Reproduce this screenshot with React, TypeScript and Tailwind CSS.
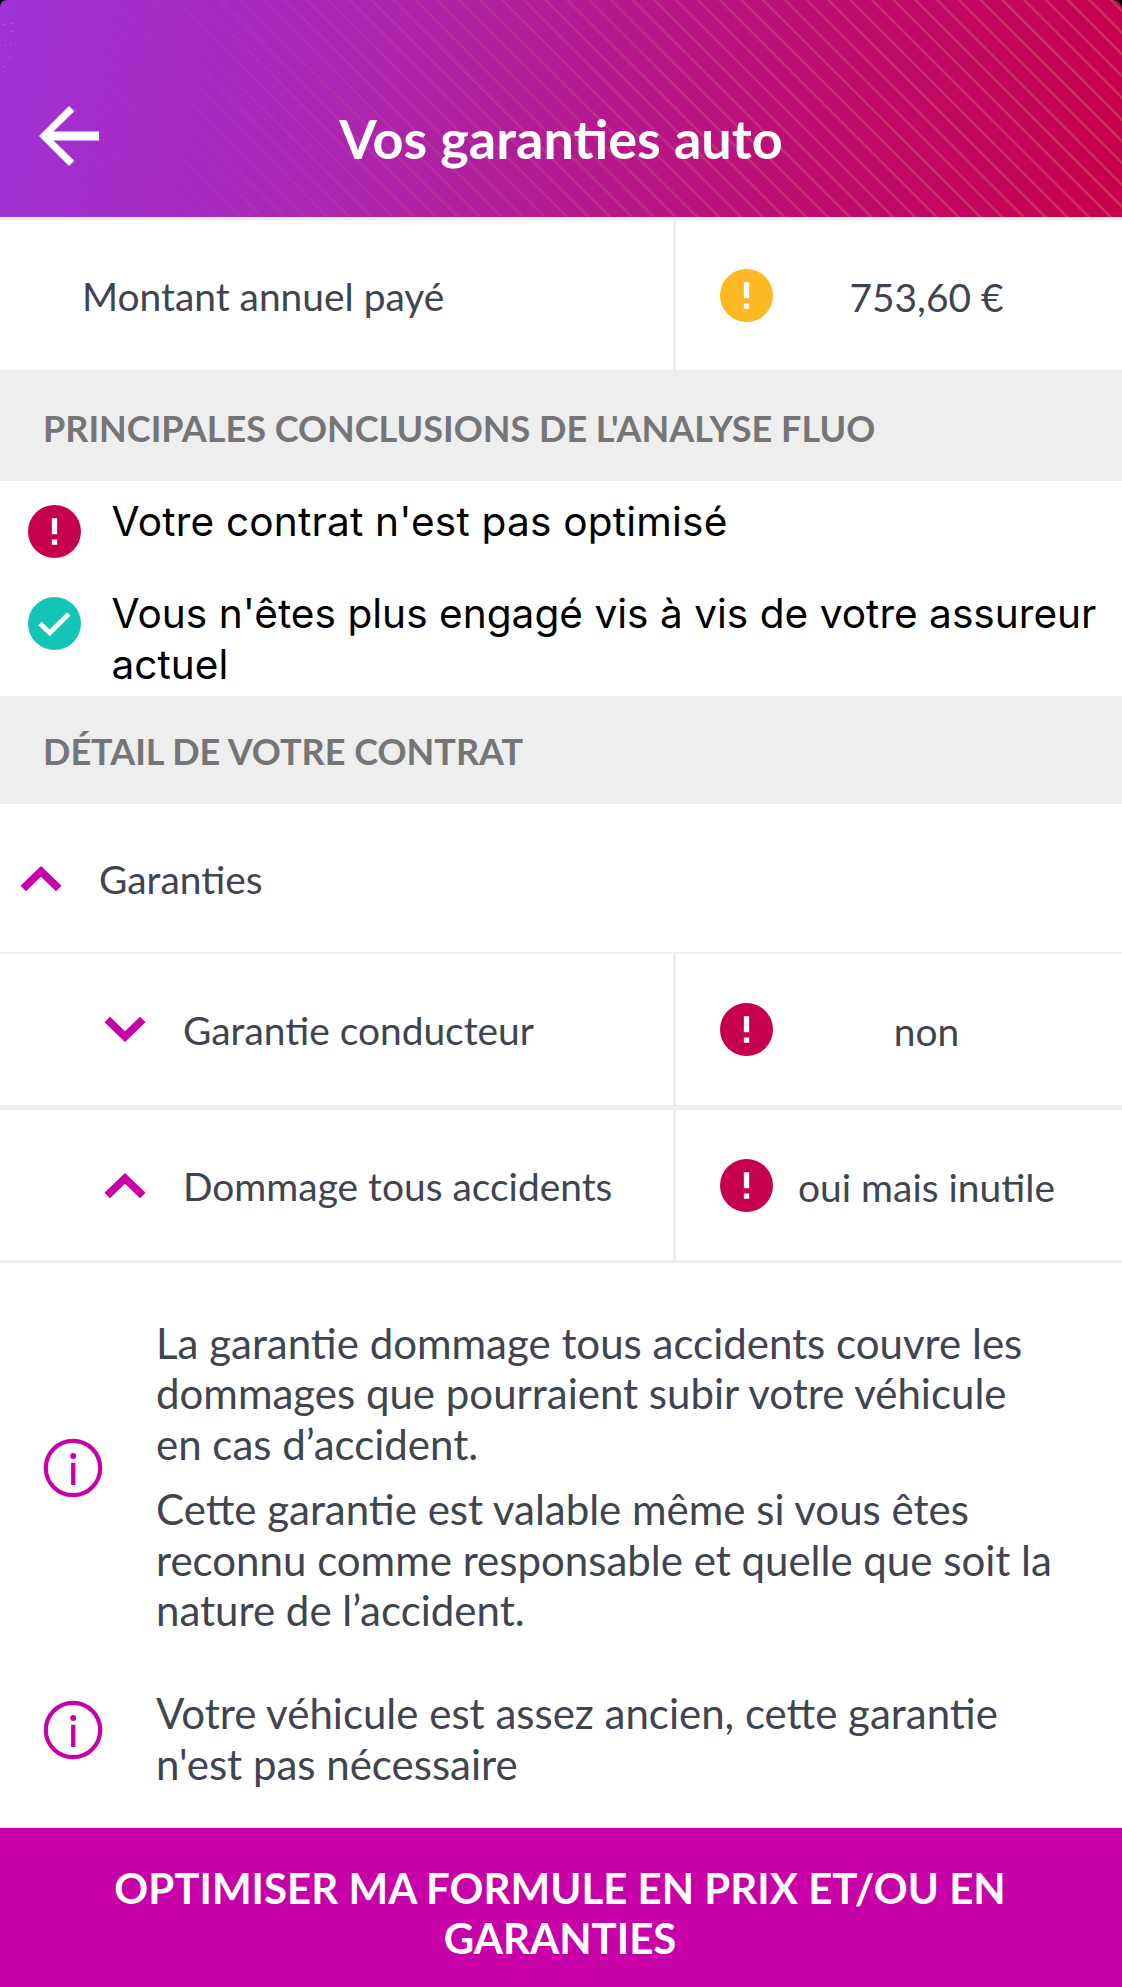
import type { ReactNode } from "react";

function BackArrow() {
  return (
    <svg viewBox="0 0 24 24" className="size-[90px] shrink-0 fill-white">
      <path d="M20 10.83H7.83l5.59-5.42L12 4l-8 8 8 8 1.41-1.41-5.58-5.42H20z" />
    </svg>
  );
}

function Sparkles() {
  const dots = [[4, 24], [12, 23], [11, 31], [5, 45], [10, 43], [9, 57], [4, 66]];
  return (
    <svg viewBox="0 0 20 70" className="pointer-events-none absolute top-0 left-0 h-[70px] w-[20px] fill-white/35">
      {dots.map(([x, y]) => (
        <rect key={`${x}-${y}`} x={x} y={y} width="1" height="1" />
      ))}
    </svg>
  );
}

function AlertIcon({ className }: { className: string }) {
  return (
    <svg viewBox="2 2 20 20" className={`size-[53px] shrink-0 ${className}`}>
      <circle cx="12" cy="12" r="10" fill="currentColor" />
      <path d="M11 7h2v6h-2zM11 15h2v2h-2z" fill="white" />
    </svg>
  );
}

function CheckIcon() {
  return (
    <svg viewBox="0 0 53 53" className="size-[53px] shrink-0 text-[#12c5b7]">
      <circle cx="26.5" cy="26.5" r="26.5" fill="currentColor" />
      <path d="M12 26.6l9.7 9.2L40.7 17" fill="none" stroke="white" strokeWidth="4.8" />
    </svg>
  );
}

function Chevron({ open }: { open: boolean }) {
  return (
    <svg viewBox="0 0 24 24" className="size-[82px] shrink-0 fill-[#c800a8]">
      {open ? (
        <path d="M12 8.2l-6 5.8 1.6 1.6L12 11.35l4.4 4.25L18 14z" />
      ) : (
        <path d="M16.4 8.1L12 12.35 7.6 8.1 6 9.7l6 5.8 6-5.8z" />
      )}
    </svg>
  );
}

function InfoIcon() {
  return (
    <svg viewBox="0 0 60 60" className="mb-[32px] size-[60px] shrink-0 text-[#c800a8]">
      <circle cx="30" cy="30" r="27.2" fill="none" stroke="currentColor" strokeWidth="4.2" />
      <circle cx="30.2" cy="18" r="3" fill="currentColor" />
      <path d="M28.1 24.7h4.3v22.4h-4.3z" fill="currentColor" />
    </svg>
  );
}

function SectionTitle({ className, children }: { className: string; children: ReactNode }) {
  return (
    <h2 className={`flex items-center bg-[#eeeeee] pl-[43px] text-[36px] font-bold text-[#757577] ${className}`}>
      {children}
    </h2>
  );
}

function Value({ icon, children }: { icon: string; children: ReactNode }) {
  return (
    <div className="flex h-full w-[449px] items-center border-l-[3px] border-[#eeeeee] pl-[44px]">
      <AlertIcon className={icon} />
      <span className="w-[307px] pt-[3px] text-center">{children}</span>
    </div>
  );
}

export default function App() {
  return (
    <div className="h-[1987px] w-[1122px] overflow-hidden bg-black font-['Lato',sans-serif] text-[38.9px] leading-[50px] text-[#40444f]">
      <header className="relative grid h-[217px] grid-cols-[115px_1fr_115px] items-center overflow-hidden rounded-tl-[7px] rounded-tr-[9px] bg-[linear-gradient(100deg,#a032d8_0%,#aa28b8_27%,#b41a92_50%,#c00a68_79%,#c8004a_100%)] pt-[56px]">
        <div className="absolute inset-0 bg-[repeating-linear-gradient(45deg,#d8d0703d_0px,#d8d0703d_1.9px,transparent_2.6px,transparent_14.9px,#d8d0703d_15.38px)] [mask-image:linear-gradient(90deg,transparent_3%,black_100%)]" />
        <Sparkles />
        <div className="relative -mt-0.5 pl-[24px]">
          <BackArrow />
        </div>
        <h1 className="relative pt-[5px] text-center text-[54px] leading-[64px] font-bold text-white">Vos garanties auto</h1>
      </header>

      <main className="flex h-[1611px] flex-col border-t-[3px] border-[#eeeeee] bg-white">
        <div className="flex h-[150px] items-center justify-between">
          <span className="pt-px pl-[82px]">Montant annuel payé</span>
          <Value icon="text-[#fdb924]">753,60 €</Value>
        </div>

        <SectionTitle className="h-[111px] pt-[5px]">PRINCIPALES CONCLUSIONS DE L'ANALYSE FLUO</SectionTitle>

        <ul className="flex h-[215px] flex-col gap-[41px] pt-[15px] font-['Inter',sans-serif] text-[40.6px] leading-[51px] text-black">
          <li className="flex items-start gap-[30.5px] pl-[28px] tracking-[0.2px]">
            <span className="-mb-[11px] pt-[9px]">
              <AlertIcon className="text-[#c7004e]" />
            </span>
            Votre contrat n'est pas optimisé
          </li>
          <li className="flex items-start gap-[30.5px] pl-[28px] tracking-[0.02px]">
            <span className="pt-[9px]">
              <CheckIcon />
            </span>
            <span>
              Vous n'êtes plus engagé vis à vis de votre assureur
              <br />
              actuel
            </span>
          </li>
        </ul>

        <SectionTitle className="h-[108px] pt-[1px]">DÉTAIL DE VOTRE CONTRAT</SectionTitle>

        <div className="flex h-[150px] items-center gap-[17px] border-b-2 border-[#eeeeee] pt-[2px]">
          <Chevron open />
          Garanties
        </div>
        <div className="flex h-[156px] items-center justify-between border-b-[5px] border-[#eeeeee]">
          <span className="flex items-center gap-[17px] pl-[84px]">
            <Chevron open={false} />
            Garantie conducteur
          </span>
          <Value icon="text-[#c7004e]">non</Value>
        </div>
        <div className="flex h-[153px] items-center justify-between border-b-[3px] border-[#eeeeee]">
          <span className="flex items-center gap-[17px] pt-[2px] pl-[84px]">
            <Chevron open />
            Dommage tous accidents
          </span>
          <Value icon="text-[#c7004e]">oui mais inutile</Value>
        </div>

        <div className="flex flex-col gap-[37px] pt-[54.5px] text-[42px] leading-[50.6px]">
          <div className="flex items-center gap-[53px] pl-[43px]">
            <InfoIcon />
            <div>
              <p className="pb-[15px]">
                La garantie dommage tous accidents couvre les
                <br />
                dommages que pourraient subir votre véhicule
                <br />
                en cas d’accident.
              </p>
              <p className="pb-[15px]">
                Cette garantie est valable même si vous êtes
                <br />
                reconnu comme responsable et quelle que soit la
                <br />
                nature de l’accident.
              </p>
            </div>
          </div>
          <div className="flex items-center gap-[53px] pl-[43px]">
            <InfoIcon />
            <p className="pb-[15px]">
              Votre véhicule est assez ancien, cette garantie
              <br />
              n'est pas nécessaire
            </p>
          </div>
        </div>
      </main>

      <button className="flex h-[159px] w-full items-center justify-center bg-[#c800a8] pt-[11px] pr-0.5 text-center text-[42px] leading-[50px] font-bold text-white">
        <span>
          OPTIMISER MA FORMULE EN PRIX ET/OU EN
          <br />
          GARANTIES
        </span>
      </button>
    </div>
  );
}
